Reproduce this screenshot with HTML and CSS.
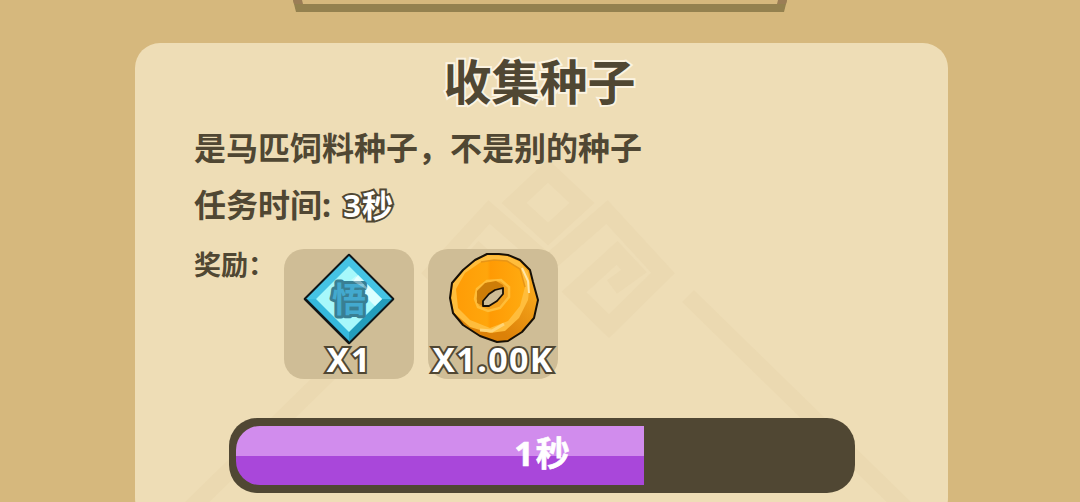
FILE: index.html
```html
<!DOCTYPE html>
<html lang="zh-CN">
<head>
  <meta charset="UTF-8">
  <title>收集种子</title>
  <link rel="stylesheet" href="styles.css">
</head>
<body>

  <svg class="frame" width="494" height="13" viewBox="0 0 494 13">
    <path d="M0 0H9V4H485V0H494L491 12H3Z" fill="#94814f"/>
    <path d="M0 0H9L10 4H1ZM494 0H485L484 4H493Z" fill="#9b7d56"/>
  </svg>

  <main class="card">
    <svg class="pattern" width="813" height="459" viewBox="135 43 813 459">
      <g fill="none" stroke="#ebd9b1" stroke-width="17">
        <path d="M548 171L582 203L548 234L514 203Z"/>
        <path d="M552 260L607 212L663 273L609 326L574 292L617 253L634 271L612 287"/>
        <path d="M544 260L489 212L433 273L487 326L522 292L479 253L462 271L484 287"/>
        <path d="M688 296L907 510M408 296L189 510"/>
      </g>
    </svg>

    <h1>收集种子</h1>
    <p class="desc">是马匹饲料种子，不是别的种子</p>
    <p class="time">任务时间: <span class="outlined">3秒</span></p>

    <div class="rewards">
      <span class="rewards-label">奖励：</span>
      <div class="item">
        <svg width="92" height="92" viewBox="0 0 92 92">
          <path d="M46 2L90 46L46 90L2 46Z" fill="#35b9dd" stroke="#101618" stroke-width="2.5" stroke-linejoin="round"/>
          <path d="M46 3L16 33L3 46L13 46L46 13L79 46L89 46Z" fill="#45c3e4"/>
          <path d="M46 89L46 79L79 46L89 46Z" fill="#239dbd"/>
          <path d="M46 13L79 46L46 79L13 46Z" fill="#a7f8fb"/>
          <path d="M55 22L79 46L72 53L49 30Z" fill="#dcffff"/>
          <text x="46" y="59" class="glyph">悟</text>
          <path d="M53 23L69 40L63 36L48 27Z" fill="#fff" opacity=".35"/>
        </svg>
        <span class="count">X1</span>
      </div>
      <div class="item">
        <svg width="92" height="92" viewBox="0 0 92 92">
          <defs>
            <linearGradient id="gold" x1="0" y1="0" x2="1" y2="0">
              <stop offset="0" stop-color="#ff9c06"/>
              <stop offset=".45" stop-color="#ffa60c"/>
              <stop offset=".5" stop-color="#ff9a04"/>
              <stop offset="1" stop-color="#ffab10"/>
            </linearGradient>
            <linearGradient id="side" x1="0" y1="1" x2="1" y2="0">
              <stop offset=".35" stop-color="#dc8108"/>
              <stop offset=".75" stop-color="#f6a51b"/>
            </linearGradient>
          </defs>
          <path d="M40 1L52 1L61 2L73 7L83 17L86 29L91 47L87 65L75 79L61 88L50 89L33 83L16 72L6 60L3 45L5 30L16 17L28 7Z" fill="url(#side)"/>
          <path d="M40 2L61 3L73 9L81 19L83 30L81 47L72 65L58 78L43 80L23 74L7 60L4 45L6 30L17 17L29 7Z" fill="#ffbd3c"/>
          <path d="M34 9L47 7L60 8L73 16L78 34L73 53L61 68L43 75L23 67L11 55L9 36L18 20Z" fill="url(#gold)"/>
          <path d="M34 9L47 7L60 8L73 16L78 34" fill="none" stroke="#e89516" stroke-width="1.5"/>
          <path d="M40 28L54 27L62 34L62 44L53 55L41 58L31 54L28 46L30 36Z" fill="#f5a21c" stroke="#ffbd38" stroke-width="2.5"/>
          <path d="M30 50L30 38L38 30L49 28L56 32L57 36L48 38L37 46L36 53Z" fill="#cd7d08"/>
          <path d="M75 15L81 28L82 40" fill="none" stroke="#ffe6a8" stroke-width="2"/>
          <path d="M33 77L45 78L57 71" fill="none" stroke="#ffd475" stroke-width="3"/>
          <path d="M36 53L36 48L42 41L48 37L56 35L56 41L50 48L42 53Z" fill="#cfbd96" stroke="#171006" stroke-width="1.8" stroke-linejoin="round"/>
          <path d="M40 1L52 1L61 2L73 7L83 17L86 29L91 47L87 65L75 79L61 88L50 89L33 83L16 72L6 60L3 45L5 30L16 17L28 7Z" fill="none" stroke="#171006" stroke-width="2" stroke-linejoin="round"/>
        </svg>
        <span class="count">X1.00K</span>
      </div>
    </div>

    <div class="progress">
      <div class="progress-fill" style="width: 408px"></div>
      <span class="progress-text">1秒</span>
    </div>
  </main>

</body>
</html>
```

FILE: styles.css
```css
* {
  box-sizing: border-box;
}
body {
  margin: 0;
  height: 502px;
  overflow: hidden;
  background: #d6b87d;
  color: #504733;
  font-family: "Noto Sans", "Noto Sans CJK SC", sans-serif;
  font-weight: bold;
}
.frame {
  display: block;
  margin-left: 293px;
}
.card {
  position: relative;
  width: 813px;
  height: 480px;
  margin: 30px 0 0 135px;
  padding: 9px 60px 0 59px;
  background: #eeddb6;
  border-radius: 25px;
}
.pattern {
  position: absolute;
  left: 0;
  top: 0;
}
h1, p, .rewards, .progress {
  position: relative;
  margin: 0;
}
h1 {
  padding-right: 3px;
  font-size: 48px;
  line-height: 60px;
  text-align: center;
  -webkit-text-stroke: 4px #fbf3e1;
  paint-order: stroke fill;
}
.desc {
  margin-top: 14px;
  font-size: 32px;
  line-height: 44px;
}
.time {
  margin-top: 13px;
  font-size: 32px;
  line-height: 44px;
}
.outlined,
.count {
  color: #fff;
  -webkit-text-stroke: 4px #504733;
  stroke-linejoin: round;
  paint-order: stroke fill;
}
.outlined {
  margin-left: 4px;
  font-size: 31px;
  letter-spacing: 1px;
}
.rewards {
  display: flex;
  margin-top: 22px;
}
.rewards-label {
  width: 90px;
  font-size: 27px;
  line-height: 32px;
  white-space: nowrap;
}
.item {
  display: flex;
  flex-direction: column;
  align-items: center;
  width: 130px;
  height: 130px;
  margin-right: 14px;
  padding-top: 4px;
  background: #cfbd96;
  border-radius: 20px;
}
.item svg {
  flex: none;
}
.glyph {
  fill: #43a9ce;
  stroke: #397f93;
  stroke-width: 6px;
  stroke-linejoin: round;
  paint-order: stroke fill;
  font-size: 34px;
  text-anchor: middle;
}
.count {
  font-size: 34px;
  line-height: 29px;
  letter-spacing: 1.4px;
  white-space: nowrap;
}
.progress {
  width: 626px;
  height: 75px;
  margin: 39px 0 0 35px;
  padding: 8px 7px;
  background: #504733;
  border-radius: 28px;
}
.progress-fill {
  height: 59px;
  background: linear-gradient(#d18ced 30px, #a947da 30px);
  border-radius: 24px 0 0 24px;
}
.progress-text {
  position: absolute;
  left: 2px;
  right: 0;
  top: 13px;
  color: #fff;
  font-size: 34px;
  line-height: 44px;
  letter-spacing: 2px;
  text-align: center;
  -webkit-text-stroke: 0.6px #fff;
}
```
